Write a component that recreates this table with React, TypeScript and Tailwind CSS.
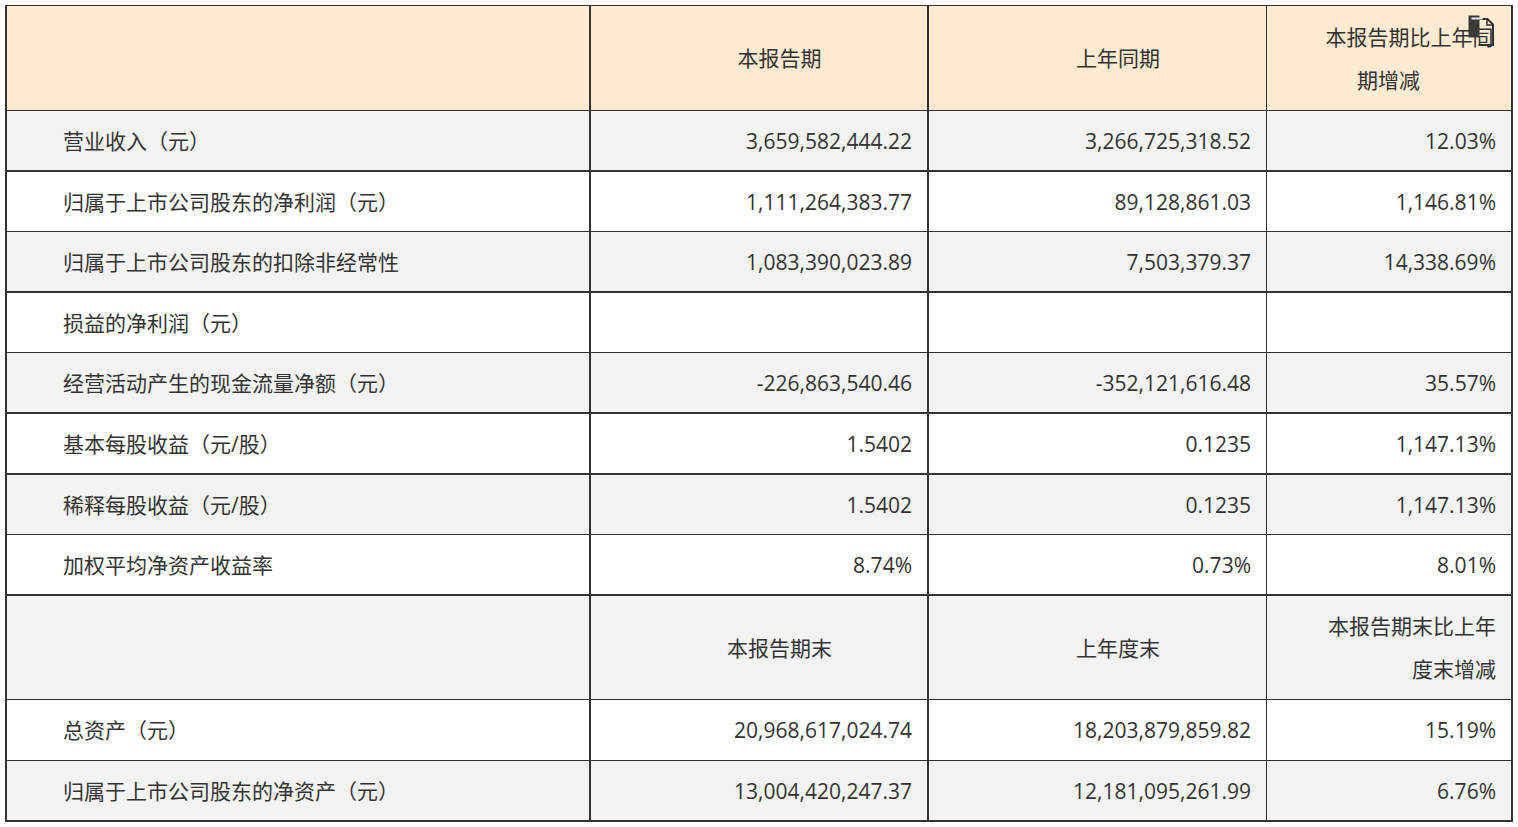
import React from "react";

type Align = "left" | "center" | "right";
type Row = {
  cells: React.ReactNode[];
  aligns: Align[];
  h: string;
  thick: boolean;
  bg: "peach" | "gray" | "white";
};

const HDR: Align[] = ["left", "center", "center", "center"];
const NUM: Align[] = ["left", "right", "right", "right"];

const rows: Row[] = [
  {
    cells: ["", "本报告期", "上年同期", <>本报告期比上年同<br />期增减</>],
    aligns: HDR,
    h: "h-[105px]",
    thick: false,
    bg: "peach",
  },
  { cells: ["营业收入（元）", "3,659,582,444.22", "3,266,725,318.52", "12.03%"], aligns: NUM, h: "h-[61px]", thick: true, bg: "gray" },
  { cells: ["归属于上市公司股东的净利润（元）", "1,111,264,383.77", "89,128,861.03", "1,146.81%"], aligns: NUM, h: "h-[60px]", thick: false, bg: "white" },
  { cells: ["归属于上市公司股东的扣除非经常性", "1,083,390,023.89", "7,503,379.37", "14,338.69%"], aligns: NUM, h: "h-[61px]", thick: true, bg: "gray" },
  { cells: ["损益的净利润（元）", "", "", ""], aligns: NUM, h: "h-[60px]", thick: false, bg: "white" },
  { cells: ["经营活动产生的现金流量净额（元）", "-226,863,540.46", "-352,121,616.48", "35.57%"], aligns: NUM, h: "h-[61px]", thick: true, bg: "gray" },
  { cells: ["基本每股收益（元/股）", "1.5402", "0.1235", "1,147.13%"], aligns: NUM, h: "h-[61px]", thick: true, bg: "white" },
  { cells: ["稀释每股收益（元/股）", "1.5402", "0.1235", "1,147.13%"], aligns: NUM, h: "h-[60px]", thick: false, bg: "gray" },
  { cells: ["加权平均净资产收益率", "8.74%", "0.73%", "8.01%"], aligns: NUM, h: "h-[61px]", thick: true, bg: "white" },
  {
    cells: ["", "本报告期末", "上年度末", <>本报告期末比上年<br />度末增减</>],
    aligns: ["left", "center", "center", "right"],
    h: "h-[104px]",
    thick: false,
    bg: "gray",
  },
  { cells: ["总资产（元）", "20,968,617,024.74", "18,203,879,859.82", "15.19%"], aligns: NUM, h: "h-[61px]", thick: false, bg: "white" },
  { cells: ["归属于上市公司股东的净资产（元）", "13,004,420,247.37", "12,181,095,261.99", "6.76%"], aligns: NUM, h: "h-[61px]", thick: true, bg: "gray" },
];

const colRight = ["border-r-2", "border-r-2", "border-r", "border-r-2"];
const alignCls: Record<Align, string> = {
  left: "text-left",
  center: "text-center",
  right: "text-right",
};
const bgCls = {
  peach: "bg-[#ffebd1]",
  gray: "bg-[#f3f3f3]",
  white: "bg-white",
};

function CopyIcon() {
  return (
    <svg
      width="30"
      height="34"
      viewBox="0 0 30 34"
      className="absolute left-[1466px] top-[14px]"
    >
      <path
        d="M12.5 5 H21.5 L27 10.5 V31 H12.5"
        fill="none"
        stroke="#333"
        strokeWidth="2"
      />
      <path d="M21 5 V11 H27" fill="none" stroke="#333" strokeWidth="1.6" />
      <rect x="2.5" y="1.5" width="11" height="22" fill="#3b3b3b" />
      <rect x="5.5" y="3.5" width="11" height="2" fill="#e6e6e6" />
    </svg>
  );
}

export default function App() {
  return (
    <div className="relative w-[1518px] h-[827px] bg-white font-['Open_Sans','Noto_Sans_CJK_SC',sans-serif] text-[21px] leading-[43px] text-[#333]">
      <div className="ml-[5px] pt-[5px]">
        <div className="w-[1508px] border-l-2 border-t border-[#333] grid grid-cols-[584px_338px_338px_246px]">
          {rows.map((r, ri) =>
            r.cells.map((c, ci) => (
              <div
                key={`${ri}-${ci}`}
                className={`${r.h} ${bgCls[r.bg]} ${colRight[ci]} ${r.thick ? "border-b-2" : "border-b"} border-[#333] flex items-center pl-[14px] pr-[15px] pt-px`}
              >
                <div className={`w-full indent-[42px] whitespace-nowrap ${alignCls[r.aligns[ci]]}`}>
                  {c}
                </div>
              </div>
            ))
          )}
        </div>
      </div>
      <CopyIcon />
    </div>
  );
}
